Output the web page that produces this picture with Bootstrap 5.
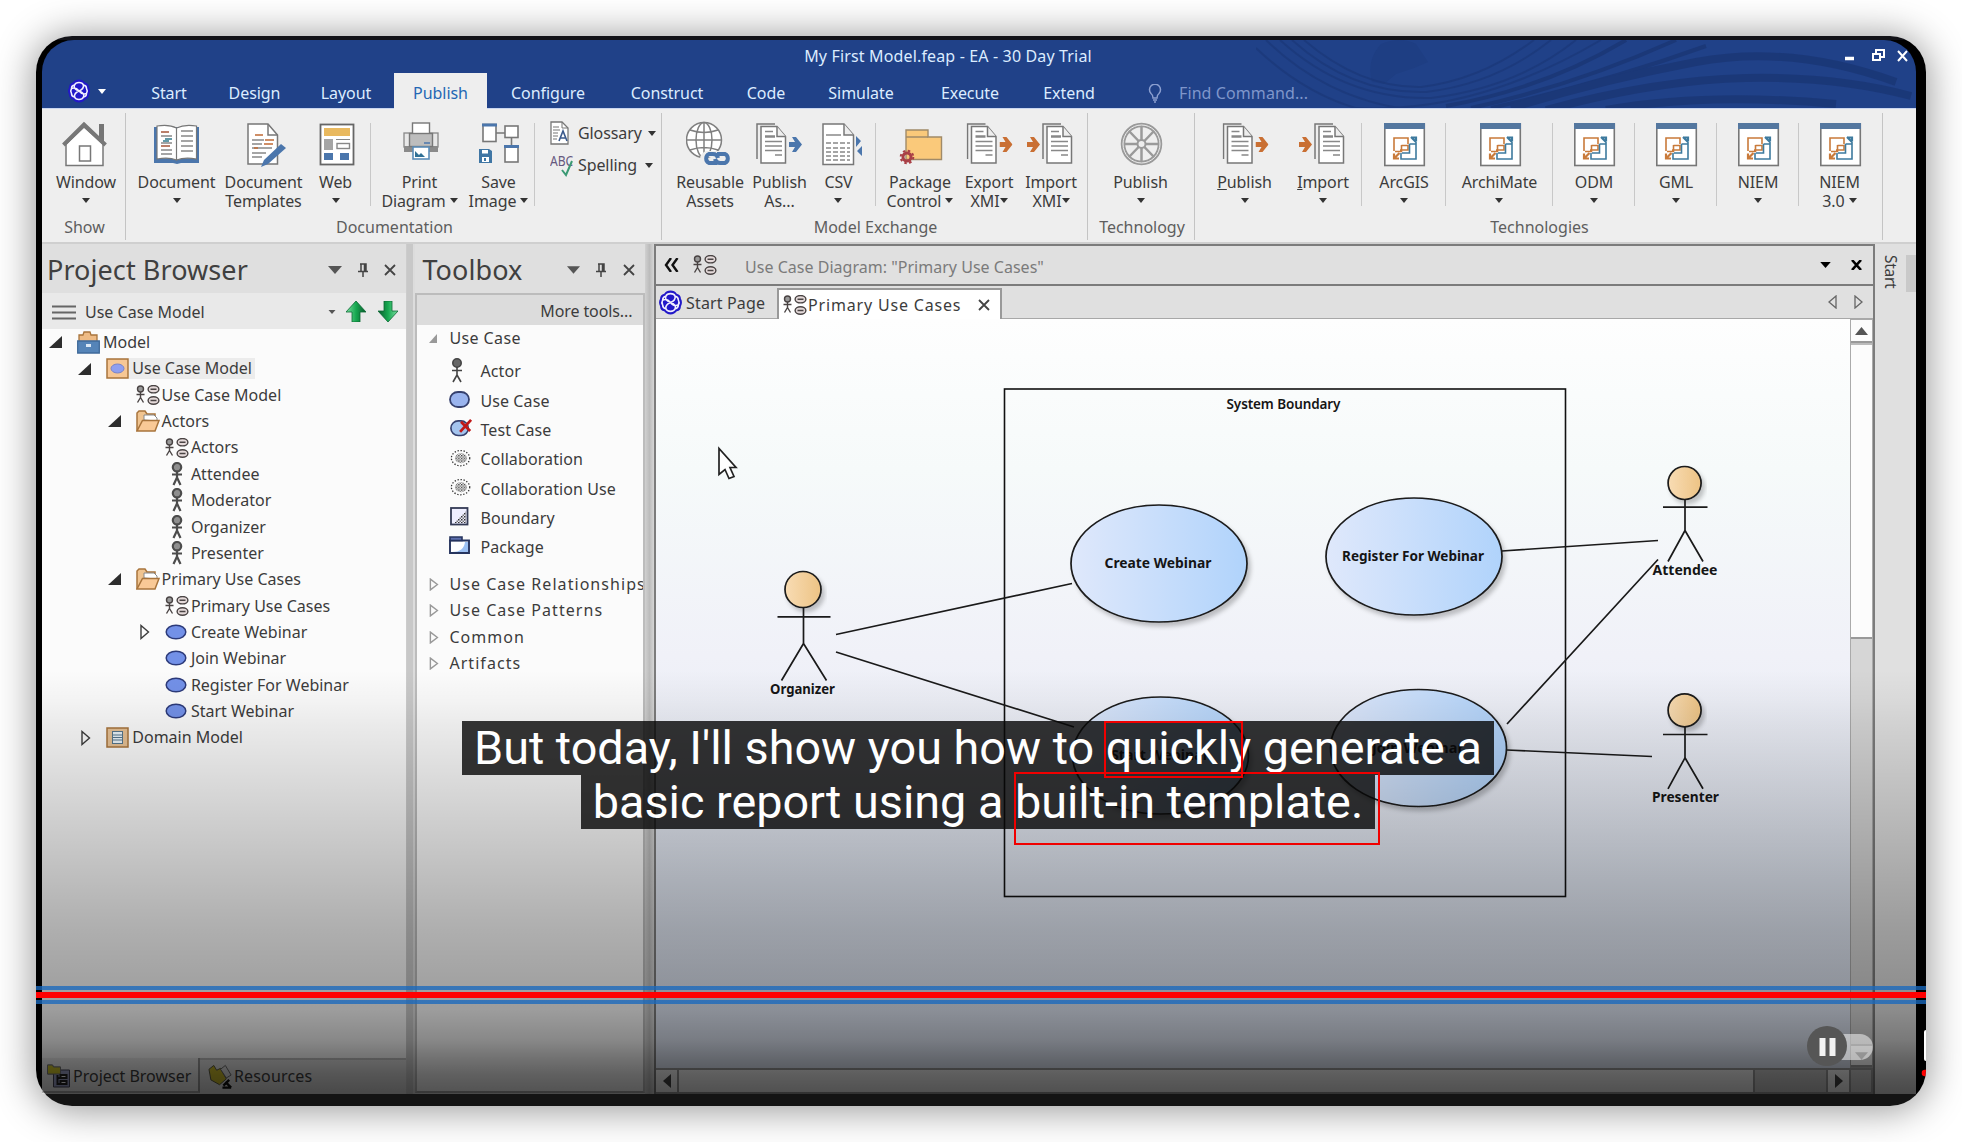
<!DOCTYPE html>
<html lang="en">
<head>
<meta charset="utf-8">
<title>My First Model.feap - EA - 30 Day Trial</title>
<meta name="viewport" content="width=device-width, initial-scale=1">
<link rel="stylesheet" href="https://cdn.jsdelivr.net/npm/bootstrap@5.3.0/dist/css/bootstrap.min.css">
<style>
body{background:#fff;font-family:"Noto Sans",sans-serif;font-size:16px;line-height:1.15;color:#3c3c3c;width:1962px;height:1142px;overflow:hidden;padding:36px}
.player{width:1890px;height:1070px;border-radius:36px;padding:4px 10px 12px 6px;background:linear-gradient(#131318 4px,#000 4px 1058px,#141414 1058px);box-shadow:0 2px 38px 2px rgba(0,0,0,.42);position:relative}
.clip{position:absolute;inset:0;border-radius:36px;overflow:hidden}
.stage{height:1054px;width:1874px;overflow:hidden;border-radius:32px 32px 22px 30px/32px 32px 0 0}
svg{display:block;flex:none}
/* title bar */
.titlebar{height:69px;background:#204188;color:#dcecff;position:relative;border-bottom:1px solid #c9d6f0}
.titlebar>.swirl{position:absolute;right:0;top:0}
.titlerow{height:33px;position:relative}
.titletext{padding-left:10px;font-size:16px;letter-spacing:.15px}
.winbtns{width:72px;height:33px}
.menu{height:35px;display:grid;grid-template-columns:85px 84px 87px 96px 93px 122px 116px 82px 108px 110px 88px 49px 140px;position:relative;letter-spacing:-.05px}
.menu>*{display:flex;align-items:center;justify-content:center;padding-top:4px;white-space:nowrap}
.menu>.current{background:#eee;color:#2467b4;height:36px}
.menu>.find{color:#7f96cb;justify-content:flex-start;padding-left:17px;letter-spacing:.1px}
.menu>.bulb{justify-content:flex-end}
/* ribbon */
.ribbon{height:135px;background:#eee;padding-top:4px;border-bottom:2px solid #cfcfcf;letter-spacing:-.1px}
.grp{height:127px;border-right:1px solid #c4c4c4;display:flex;flex-direction:column}
.grp>.items{height:102px;display:grid;white-space:nowrap}
.grp>.cap{text-align:center;color:#5e5e5e;height:25px;line-height:25px;letter-spacing:0;padding-left:2px}
.it{display:flex;flex-direction:column;align-items:center;padding-top:8px;line-height:18.5px;text-align:center}
.it>span{margin-top:6px;margin-left:-20px;margin-right:-20px}
.cut{background:linear-gradient(#c8c8c8,#c8c8c8) right 10px/1px 83px no-repeat}
.ar{display:inline-block;width:0;height:0;border:4px solid transparent;border-top:5px solid #333;border-bottom:0;vertical-align:4px}
.g1{width:84px}.g1 .items{grid-template-columns:88px}
.g2{width:536px}.g2 .items{grid-template-columns:101px 73px 71px 97px 61px 133px}
.g3{width:426px}.g3 .items{grid-template-columns:96px 43px 75px 88px 50px 74px}
.g4{width:107px}.g4 .items{grid-template-columns:105px}
.g5{width:688px}.g5 .items{grid-template-columns:10px 79px 78px 84px 107px 82px 82px 82px 81px}
.small-it{display:flex;align-items:center;height:32px}
.small-it>svg:first-child{width:28px}
/* panels */
.main{height:850px;background:#dadada}
.paneltitle{font-size:27px;height:49px;padding:2px 0 0 5px;background:#dfdfdf;color:#404040;white-space:nowrap;letter-spacing:.08px}
.browser{width:366px;background:#dfdfdf;border-right:1px solid #ccc}
.pathbar{height:36px;background:#e9e9e9;padding:2px 0 0 10px}
.tree{height:731px;background:#fbfbfb;margin:0;padding:0 0 0 7px;list-style:none;border-bottom:2px solid #c0c0c0}
.tree li{height:26.36px;display:flex;align-items:center;white-space:nowrap}
.tree .tw{width:28px}
.tree .ic{width:26px}
.d1{padding-left:29.3px}.d2{padding-left:58.6px}.d3{padding-left:87.9px}
.tree .picked{background:#ececec;padding:1px 3px 2px;margin:0 -3px}
.btabs{height:33px}
.btabs>div{display:flex;align-items:center;padding-left:4px;height:33px}
.btabs>.on{background:#ececec;width:158px;border-right:2px solid #999;border-bottom:2px solid #aaa;margin-top:-2px;height:35px;padding-top:3px}
.split1{width:8px;background:#c8c8c8;border-right:2px solid #dcdcdc}
.tools{width:230px;background:#dfdfdf;overflow:hidden}
.toolbody{height:800px;margin-top:0;border:2px solid #bcbcbc;border-bottom:2px solid #aaa;background:#fbfbfb;width:230px;overflow:hidden;letter-spacing:.1px}
.more{background:#dcdcdc;height:30px;text-align:right;padding:7px 11px 0 0;letter-spacing:-.1px}
.tgrp{display:flex;align-items:center;height:26.4px;white-space:nowrap;letter-spacing:1.05px;padding-left:11px}
.tgrp.top{height:27px;letter-spacing:.4px}
.tgrp>svg{width:21px}
.titem{display:flex;align-items:center;height:29.3px;white-space:nowrap;padding-left:32px}
.titem>svg{margin-right:7px}
.split2{width:9px;background:linear-gradient(90deg,#d0d0d0,#bcbcbc 50%,#d6d6d6)}
.work{width:1221px;border:2px solid #7c7c7c;border-bottom:0;background:#e0e0e0}
.crumb{height:40px;border-bottom:2px solid #7c7c7c;color:#7b7b7b;padding-left:8px}
.crumb span{padding-top:5px;letter-spacing:.02px}
.doctabs{height:33px;border-bottom:1px solid #a8a8a8;padding-left:2px}
.doctabs .open{background:#fff;border:1px solid #999;border-width:2px 2px 0;width:225px;height:31px;margin-top:2px;padding:1px 0 0 4px;letter-spacing:.82px}
.canvas{width:1194px;height:749px;background:linear-gradient(#fefefe,#f6fafa 20%,#f0f1f8 45%,#e2e8f3 75%,#dde4f2)}
.vscroll{width:23px;height:749px;background:#d6d6d6;border:1px solid #aaa}
.vscroll .bx{height:23px;background:#fcfcfc;border-bottom:2px solid #999}
.vscroll .th{height:296px;background:#fcfcfc;border-top:2px solid #bbb;border-bottom:2px solid #999}
.hscroll{height:26px;background:#c8c8c8;border:2px solid #999;border-left:0}
.hscroll .bx,.hscroll .th{background:#f4f4f4;border-right:2px solid #999}
.hscroll .bx{width:23px}.hscroll .th{width:1076px}
.dock{width:41px;background:#e0e0e0;padding:11px 0 0 8px}
.dock span{writing-mode:vertical-rl;line-height:16px;letter-spacing:-.3px;font-size:15.5px}
.dock i{width:10px;height:37px;background:#c9c9c9;margin-left:auto}
/* player overlays */
.scrim{position:absolute;left:6px;width:1874px;top:604px;height:454px;background:linear-gradient(rgba(0,0,0,0) 30px,rgba(0,0,0,.03) 60px,rgba(0,0,0,.065) 85px,rgba(0,0,0,.125) 135px,rgba(0,0,0,.19) 190px,rgba(0,0,0,.305) 290px,rgba(0,0,0,.355) 345px,rgba(0,0,0,.375) 370px,rgba(0,0,0,.46) 400px,rgba(0,0,0,.555) 420px,rgba(0,0,0,.62) 435px,rgba(0,0,0,.675) 454px)}
.subs{position:absolute;left:0;top:685px;width:1884px;font-family:Roboto,sans-serif;font-size:46.75px;line-height:55px;color:#fff;white-space:nowrap}
.subs div{background:rgba(8,8,8,.81);height:54px;text-align:center}
.s1{width:1032px;margin-left:426px}
.s2{width:794px;margin-left:545px}
.hl{position:absolute;border:2px solid #f00000}
.hl1{left:1068px;top:685px;width:139px;height:57px}
.hl2{left:978px;top:736px;width:366px;height:73px}
.bars{position:absolute;left:0;right:0;top:950px;height:18px;background:linear-gradient(rgba(25,105,190,.78) 0 4px,transparent 4px 6px,#f00 6px 12px,transparent 12px 14px,rgba(25,105,190,.78) 14px)}
.toggle{position:absolute;left:1770px;top:988px}
</style>
<script src="https://cdn.jsdelivr.net/npm/bootstrap@5.3.0/dist/js/bootstrap.bundle.min.js"></script>
</head>
<body>
<svg width="0" height="0" style="position:absolute">
<defs>
<linearGradient id="uc" x1="0" x2="1"><stop offset="0" stop-color="#dfe8fb"/><stop offset=".35" stop-color="#cfe1fb"/><stop offset="1" stop-color="#b0d3fb"/></linearGradient>
<linearGradient id="hd" x1="0" x2="1"><stop offset="0" stop-color="#f8dcb4"/><stop offset="1" stop-color="#edc384"/></linearGradient>
<linearGradient id="gr" x1="0" x2="1"><stop offset="0" stop-color="#7fe0a4"/><stop offset=".5" stop-color="#17a850"/><stop offset="1" stop-color="#0a5a2c"/></linearGradient>
<filter id="sh" x="-10%" y="-10%" width="125%" height="130%"><feDropShadow dx="3" dy="4" stdDeviation="2" flood-opacity=".22"/></filter>
<pattern id="dots" width="3" height="3" patternUnits="userSpaceOnUse"><rect width="1.5" height="1.5" fill="#333"/><rect x="1.5" y="1.5" width="1.5" height="1.5" fill="#777"/></pattern>
</defs>
<symbol id="house" viewBox="0 0 48 46"><path d="M37 3h5v20l-5-5z" fill="#757575"/><path d="M4 44.500V23L22 6l19 17v21.500z" fill="#fff" stroke="#777" stroke-width="1.500"/><path d="M1.500 24L22 3.500 43.500 24" fill="none" stroke="#777" stroke-width="4"/><rect x="17.500" y="25" width="11" height="15" fill="#fff" stroke="#777" stroke-width="1.500"/></symbol>
<symbol id="book" viewBox="0 0 48 46"><path d="M1 6h45v36H28l-4 1-4-1H1z" fill="#4b76ac"/><path d="M4 5q12-2 19.500 2v32Q16 36 4 38zM43.500 5q-12-2-20 2v32q8-3 20-1z" fill="#fff" stroke="#777" stroke-width="1.200"/><path d="M8 15h11M8 22h11M8 29h11M28 10h12M28 15h12M28 20h12M28 25h12M28 30h12M8 33h11" stroke="#888" stroke-width="1.300"/><path d="M8 11h8M8 25h9" stroke="#a4553a" stroke-width="1.500"/><path d="M12 18h7M10 20h6" stroke="#2f7a8c" stroke-width="1.500"/></symbol>
<symbol id="doctpl" viewBox="0 0 48 46"><path d="M8 3h20l9.500 11v29H8z" fill="#fff" stroke="#777" stroke-width="1.500"/><path d="M28 3v11h9.500" fill="none" stroke="#777" stroke-width="1.500"/><path d="M12 19h12M12 23h10M12 27h20M12 32h14M12 36h10" stroke="#888" stroke-width="1.400"/><path d="M15 14h8M25 19h9M24 23h9M14 27h4" stroke="#c06a35" stroke-width="1.600"/><path d="M41 23l5 4-18 16-7 3 3-7z" fill="#4b76ac"/></symbol>
<symbol id="web" viewBox="0 0 48 46"><rect x="8.500" y="3.500" width="33" height="40" fill="#fff" stroke="#666" stroke-width="1.800"/><path d="M12 7h26v8H12z" fill="#e9b95f"/><path d="M12 18h9v11h-9z" fill="#a5a5a5"/><path d="M24 18.500h14" stroke="#888"/><rect x="25" y="22.500" width="12.500" height="5" fill="none" stroke="#888" stroke-width="1.400"/><path d="M12 32h9v7h-9zM28 32h9v7h-9z" fill="#4b76ac"/></symbol>
<symbol id="print" viewBox="0 0 48 46"><rect x="8" y="12" width="34" height="14" fill="#e8e8e8" stroke="#888" stroke-width="1.300"/><path d="M8 25h34v6H8z" fill="#8a8a8a"/><rect x="16.500" y="2" width="17" height="11" fill="#fff" stroke="#777" stroke-width="1.400"/><rect x="13.500" y="12.500" width="23" height="13" fill="#bdbdbd" stroke="#777" stroke-width="1.400"/><path d="M28 22h6" stroke="#4b76ac" stroke-width="1.500"/><rect x="17" y="26" width="16" height="12" fill="#fff" stroke="#5b8db8" stroke-width="1.600"/><path d="M19 36v-6l4 4 2-2 4 4z" fill="#2f7096"/></symbol>
<symbol id="saveimg" viewBox="0 0 48 46"><path d="M21 12h9M36.500 16v9" stroke="#777" stroke-width="1.600"/><g fill="#fff" stroke="#777" stroke-width="1.600"><rect x="8" y="3.500" width="13" height="17"/><rect x="30" y="5" width="13" height="11.500"/><rect x="30" y="25" width="13" height="16"/></g><path d="M7 2.500h15v3H7zM29 24h15v3H29z" fill="#4b76ac"/><path d="M4 28h10l3 2v12H4z" fill="#3f76a4"/><path d="M7 29h6v3.500H7zM7 36h7v5H7z" fill="#fff"/><path d="M9 37h2v3H9z" fill="#3f76a4"/></symbol>
<symbol id="globe" viewBox="0 0 48 46"><g fill="none" stroke="#808080" stroke-width="1.500"><ellipse cx="18" cy="19" rx="17.500" ry="17.500" fill="#fff"/><ellipse cx="18" cy="19" rx="8" ry="17.500"/><path d="M18 1.500v35M.5 19h35M4 9q14 5 28 0M4 29q14-5 28 0"/></g><g fill="none" stroke="#eee" stroke-width="6"><rect x="17" y="33" width="27" height="10" rx="5"/></g><g fill="none" stroke="#4b76ac" stroke-width="4"><path d="M31 42h-8a5 5 0 0 1 0-9h4q4 0 5 4M29 38q1 4 5 4h5a5 5 0 0 0 0-9h-8"/></g></symbol>
<symbol id="pages" viewBox="0 0 32 46"><path d="M1 38V3h18" fill="none" stroke="#777" stroke-width="1.500"/><path d="M5 5.500h16l8.500 10V42H5z" fill="#fff" stroke="#777" stroke-width="1.500"/><path d="M21 5.500v10h8.500" fill="#eee" stroke="#777" stroke-width="1.500"/><path d="M9 10.500h8M9 20.500h17M9 25h17M9 29.500h17M19 34h7" stroke="#888" stroke-width="1.400"/><path d="M9 15.500h10" stroke="#888" stroke-width="2.400"/></symbol>
<symbol id="arr" viewBox="0 0 13 15"><path d="M0 5h6L3 0h4l6 7.500L7 15H3l3-5H0z" fill="currentColor"/></symbol>
<symbol id="pubas" viewBox="0 0 48 46"><use href="#pages" width="32" height="46"/><use href="#arr" x="33" y="16" width="13" height="15" color="#4b76ac"/></symbol>
<symbol id="export" viewBox="0 0 48 46"><use href="#pages" x="1.500" width="32" height="46"/><use href="#arr" x="34.500" y="16" width="13" height="15" color="#c96f33"/></symbol>
<symbol id="import" viewBox="0 0 48 46"><use href="#pages" x="15" width="32" height="46"/><use href="#arr" x="0" y="16" width="13" height="15" color="#c96f33"/></symbol>
<symbol id="csv" viewBox="0 0 48 46"><path d="M8 3h21l9.500 11v29.500H8z" fill="#fff" stroke="#777" stroke-width="1.500"/><path d="M29 3v11h9.500" fill="#eee" stroke="#777" stroke-width="1.500"/><path d="M11 14h15" stroke="#888" stroke-width="1.500"/><path d="M11 22h24M11 27h24M11 31h24M11 35h24M11 39h24" stroke="#888" stroke-width="1.500" stroke-dasharray="5 2"/><path d="M41 15l5 5-5 6zM47 25v10l-5-5z" fill="#4b76ac"/></symbol>
<symbol id="pkgctl" viewBox="0 0 48 46"><path d="M10 38.500V9h22v7h13.500v22.500z" fill="#fac97a" stroke="#a08a68" stroke-width="1.400"/><path d="M10 16h22" stroke="#a08a68" stroke-width="1.300"/><circle cx="11" cy="36" r="4" fill="none" stroke="#a93f46" stroke-width="3"/><circle cx="11" cy="36" r="6.300" fill="none" stroke="#a93f46" stroke-width="2" stroke-dasharray="2.500 2.450"/></symbol>
<symbol id="wheel" viewBox="0 0 48 46"><g fill="none" stroke="#9a9a9a"><ellipse cx="24.500" cy="23" rx="18.500" ry="19" stroke-width="4.500"/><ellipse cx="24.500" cy="23" rx="18.500" ry="19" stroke="#eee" stroke-width="1"/><path d="M24.500 5v36M7 23h35M12 10l25 26M37 10L12 36" stroke-width="2.500"/><circle cx="24.500" cy="23" r="4" fill="#eee" stroke-width="2"/></g></symbol>
<symbol id="techno" viewBox="0 0 48 46"><rect x="4.800" y="3" width="39.500" height="41.500" fill="#fff" stroke="#777" stroke-width="1.600"/><path d="M4 2h41v6H4z" fill="#54779f"/><g fill="none" stroke-width="1.600"><path d="M14 30V17h14v6M21.500 24v6.500H15M21.500 24.500h6.500v4.500h-8" stroke="#c97a3a"/><path d="M14 32.500v5h5M14.500 37l5-5" stroke="#c97a3a" stroke-width="2.200"/><path d="M36 21v17H21v-6M29.500 23H36M29.500 23v9H22" stroke="#3d7a9e"/><path d="M31 16.500h5v4M36 21l-5-5" stroke="#3d7a9e" stroke-width="2.200"/></g></symbol>
<symbol id="gloss" viewBox="0 0 19 24"><path d="M1 1h11l6 6v16H1z" fill="#fff" stroke="#777" stroke-width="1.300"/><path d="M12 1v6h6" fill="none" stroke="#777"/><path d="M3 6h6M3 9h7M3 12h5M3 15h5M3 18h4" stroke="#777" stroke-width="1.200"/><path d="M9 20l4-10 4 10M10.500 17h5" fill="none" stroke="#3b5a8c" stroke-width="1.600"/></symbol>
<symbol id="knot" viewBox="0 0 24 24"><path d="M12 .5q4 0 6 3 4 1 4 5 2 3.500 0 7 0 4-4 5-2 3-6 3t-6-3q-4-1-4-5-2-3.500 0-7 0-4 4-5 2-3 6-3z" fill="#2218c8"/><g fill="none" stroke="#f2f0ff" stroke-width="1.500"><path d="M12 3.500q3.500 0 4.500 2.500 3 .5 3 3.500 1.500 2.500 0 5 0 3-3 3.500-1 2.500-4.500 2.500T7.500 18q-3-.5-3-3.500-1.500-2.500 0-5 0-3 3-3.500 1-2.500 4.500-2.500z"/><path d="M16.500 6q.5 4-4.500 6-5 2-4.500 6M7.500 6Q6 10 12 12q6 2 4.500 6M4.500 9.500Q9 8 12 12q3 4 7.500 2.500"/></g></symbol>
<symbol id="opened" viewBox="0 0 13 12"><path d="M13 0v12H0z" fill="#2d2d2d"/></symbol>
<symbol id="shut" viewBox="0 0 10 16"><path d="M1 1.500v13L8.500 8z" fill="none" stroke="currentColor" stroke-width="1.400"/></symbol>
<symbol id="cabinet" viewBox="0 0 23 23"><path d="M2 11V4h4l1-3h6l1 3h6v7z" fill="#eebb85" stroke="#a8743c" stroke-width="1.300"/><path d="M.7 10h21.600v12H.7z" fill="#5584b8" stroke="#3f6a9a" stroke-width="1.300"/><path d="M9 13h5v3H9z" fill="#dbe8f6"/></symbol>
<symbol id="ucpkg" viewBox="0 0 23 21"><rect x="1" y="1" width="21" height="19" fill="#f6c795" stroke="#a8743c" stroke-width="1.500"/><ellipse cx="11.500" cy="10.500" rx="6.500" ry="4.500" fill="#8f9ff0" stroke="#7a84c8"/></symbol>
<symbol id="dompkg" viewBox="0 0 23 21"><rect x="1" y="1" width="21" height="19" fill="#e6c195" stroke="#a8743c" stroke-width="1.500"/><rect x="6.500" y="4.500" width="10" height="12" fill="#e8f2f8" stroke="#56768c"/><path d="M7 8h9M7 10.500h9M7 13h9" stroke="#56768c"/></symbol>
<symbol id="ucd" viewBox="0 0 24 20"><g fill="none" stroke="#4a4444" stroke-width="1.400"><circle cx="4.500" cy="4" r="3" fill="#999"/><path d="M4.500 7v6M.5 9.500h8M4.500 12.500L1.500 17.500M4.500 12.500l3 5"/><g fill="#e5dada"><ellipse cx="17.500" cy="4.200" rx="5.400" ry="3.700"/><ellipse cx="17.500" cy="15.500" rx="5.400" ry="3.700"/></g><path d="M14.500 4.200h6M14.500 15.500h6"/></g></symbol>
<symbol id="fold" viewBox="0 0 24 22"><path d="M1 21V3l2-2h6l2 3h8v6" fill="#f0c490" stroke="#a8743c" stroke-width="1.500"/><path d="M8 10V5h10l3 3v3z" fill="#fff" stroke="#888"/><path d="M1 21L6.500 10.500H23L19 21z" fill="#f9c996" stroke="#a8743c" stroke-width="1.500"/></symbol>
<symbol id="man" viewBox="0 0 12 24"><g stroke="#4c4c4c" stroke-width="2.200" fill="none"><circle cx="6" cy="5.200" r="4.200" fill="#8f8f8f"/><path d="M6 9v7M1 12.500h10M6 15.500L2.500 23M6 15.500L9.500 23"/></g></symbol>
<symbol id="oval" viewBox="0 0 22 16"><ellipse cx="11" cy="8" rx="9.800" ry="6.800" fill="#7391e8" stroke="#2c3a7a" stroke-width="1.500"/></symbol>
<symbol id="coll" viewBox="0 0 23 19"><ellipse cx="11.500" cy="9.500" rx="10" ry="8.300" fill="none" stroke="#333" stroke-width="1.400" stroke-dasharray="1.500 1.800"/><ellipse cx="12" cy="9.500" rx="6.500" ry="5.500" fill="url(#dots)"/></symbol>
<symbol id="pin" viewBox="0 0 10 14"><path d="M2 1h6v7M3 1v7M0 8.500h10M5 8.500V14M6.500 1v7" fill="none" stroke="#444" stroke-width="1.500"/></symbol>
<symbol id="cross" viewBox="0 0 12 12"><path d="M1 1l10 10M11 1L1 11" stroke="currentColor" stroke-width="1.800"/></symbol>
<symbol id="dn" viewBox="0 0 14 8"><path d="M0 0h14L7 8z" fill="currentColor"/></symbol>
<symbol id="garrow" viewBox="0 0 20 21"><path d="M10 0l10 11h-6v10H6V11H0z" fill="url(#gr)" stroke="#0a6a34" stroke-width=".8"/></symbol>
</svg>

<div class="player">
<div class="stage">
  <header class="titlebar">
    <svg class="swirl" width="660" height="68" viewBox="0 0 660 68" fill="none" stroke="#1a3675" opacity=".8">
      <g stroke-width="2" opacity=".7"><path d="M0 8Q70 75 160 78"/><path d="M10 0Q80 68 180 72"/><path d="M24 0Q90 60 175 58 260 48 320 0"/><path d="M36 0Q96 54 170 52 240 44 295 0"/><path d="M48 0Q104 48 165 47 225 40 278 0"/><path d="M100 68Q220 74 345 0"/></g>
      <g stroke-width="4"><path d="M190 66Q290 48 370 0"/><path d="M215 68Q320 45 420 0"/><path d="M235 68Q350 42 450 6"/></g>
      <g stroke-width="8"><path d="M255 68Q345 40 440 22T640 42"/><path d="M290 70Q400 40 490 38T655 56"/><path d="M350 70Q450 52 580 64"/></g>
      <path d="M125 4q20-8 35 0l12 18-14 6-18 6-12 10-12-2q-6-22 9-38z" fill="#1a3675" stroke="none" opacity=".35"/>
    </svg>
    <div class="titlerow d-flex align-items-center">
      <div class="titletext flex-grow-1 text-center">My First Model.feap - EA - 30 Day Trial</div>
      <svg class="winbtns" viewBox="0 0 72 33" fill="none" stroke="#fff"><path d="M1 18.500h9" stroke-width="3.500"/><path d="M32 13v-3h8v7h-3" stroke-width="2"/><rect x="29" y="14" width="7" height="6" stroke-width="2"/><path d="M54 11l9 10M63 11l-9 10" stroke-width="2"/></svg>
    </div>
    <nav class="menu">
      <span class="pt-0"><svg width="24" height="24" style="margin:0 7px 0 3px"><use href="#knot"/></svg><i class="ar" style="border-top-color:#fff"></i></span>
      <span>Start</span><span>Design</span><span>Layout</span><span class="current">Publish</span><span>Configure</span><span>Construct</span><span>Code</span><span>Simulate</span><span>Execute</span><span>Extend</span>
      <span class="bulb"><svg width="14" height="19" viewBox="0 0 14 19" fill="none" stroke="#8b9fd0" stroke-width="1.500"><path d="M5 14q0-3-2-4.500a5.500 5.500 0 1 1 8 0Q9 11 9 14zM5 16h4M6 18h2"/></svg></span>
      <span class="find">Find Command...</span>
    </nav>
  </header>

  <section class="ribbon d-flex">
    <div class="grp g1"><div class="items">
      <div class="it"><svg width="48" height="46"><use href="#house"/></svg><span>Window<br><i class="ar"></i></span></div></div><div class="cap">Show</div></div>
    <div class="grp g2"><div class="items">
      <div class="it"><svg width="48" height="46"><use href="#book"/></svg><span>Document<br><i class="ar"></i></span></div>
      <div class="it"><svg width="48" height="46"><use href="#doctpl"/></svg><span>Document<br>Templates</span></div>
      <div class="it cut"><svg width="48" height="46"><use href="#web"/></svg><span>Web<br><i class="ar"></i></span></div>
      <div class="it"><svg width="48" height="46"><use href="#print"/></svg><span>Print<br>Diagram <i class="ar ms-n1"></i></span></div>
      <div class="it"><svg width="48" height="46"><use href="#saveimg"/></svg><span>Save<br>Image <i class="ar"></i></span></div>
      <div class="d-flex pt-1"><div class="me-3" style="width:1px;height:83px;margin:6px 0 0 5px;background:#c8c8c8"></div><div style="margin-left:-1px">
        <div class="small-it"><svg width="19" height="24" viewBox="0 0 28 24"><use href="#gloss" width="19" height="24"/></svg><span>Glossary</span><i class="ar" style="margin-left:6px"></i></div>
        <div class="small-it"><svg width="28" height="24" viewBox="0 0 28 24"><text x="0" y="13" font-size="14" textLength="23" lengthAdjust="spacingAndGlyphs" fill="#65587e">ABC</text><path d="M12 17l4 5 6-14" fill="none" stroke="#3b9a74" stroke-width="2"/></svg><span>Spelling</span><i class="ar ms-2"></i></div>
      </div></div></div><div class="cap">Documentation</div></div>
    <div class="grp g3"><div class="items">
      <div class="it"><svg width="48" height="46"><use href="#globe"/></svg><span>Reusable<br>Assets</span></div>
      <div class="it"><svg width="48" height="46"><use href="#pubas"/></svg><span>Publish<br>As...</span></div>
      <div class="it cut"><svg width="48" height="46"><use href="#csv"/></svg><span>CSV<br><i class="ar"></i></span></div>
      <div class="it"><svg width="48" height="46"><use href="#pkgctl"/></svg><span>Package<br>Control <i class="ar"></i></span></div>
      <div class="it"><svg width="48" height="46"><use href="#export"/></svg><span>Export<br>XMI<i class="ar"></i></span></div>
      <div class="it"><svg width="48" height="46"><use href="#import"/></svg><span>Import<br>XMI<i class="ar"></i></span></div></div><div class="cap">Model Exchange</div></div>
    <div class="grp g4"><div class="items">
      <div class="it"><svg width="48" height="46"><use href="#wheel"/></svg><span>Publish<br><i class="ar"></i></span></div></div><div class="cap">Technology</div></div>
    <div class="grp g5"><div class="items"><div></div>
      <div class="it"><svg width="48" height="46"><use href="#export"/></svg><span><u>P</u>ublish<br><i class="ar"></i></span></div>
      <div class="it cut"><svg width="48" height="46"><use href="#import"/></svg><span><u>I</u>mport<br><i class="ar"></i></span></div>
      <div class="it cut"><svg width="48" height="46"><use href="#techno"/></svg><span>ArcGIS<br><i class="ar"></i></span></div>
      <div class="it cut"><svg width="48" height="46"><use href="#techno"/></svg><span>ArchiMate<br><i class="ar"></i></span></div>
      <div class="it cut"><svg width="48" height="46"><use href="#techno"/></svg><span>ODM<br><i class="ar"></i></span></div>
      <div class="it cut"><svg width="48" height="46"><use href="#techno"/></svg><span>GML<br><i class="ar"></i></span></div>
      <div class="it cut"><svg width="48" height="46"><use href="#techno"/></svg><span>NIEM<br><i class="ar"></i></span></div>
      <div class="it"><svg width="48" height="46"><use href="#techno"/></svg><span>NIEM<br>3.0 <i class="ar"></i></span></div></div><div class="cap">Technologies</div></div>
  </section>

  <main class="main d-flex">
    <aside class="browser">
      <div class="paneltitle d-flex align-items-center"><span class="flex-grow-1">Project Browser</span><svg width="14" height="8" color="#555"><use href="#dn"/></svg><svg width="10" height="14" class="ms-3 me-3"><use href="#pin"/></svg><svg width="12" height="12" color="#444" style="margin-right:10px"><use href="#cross"/></svg></div>
      <div class="pathbar d-flex align-items-center"><svg width="24" height="15" viewBox="0 0 24 15"><path d="M0 1.500h24M0 7.500h24M0 13.500h24" stroke="#666" stroke-width="2"/></svg><span class="flex-grow-1" style="margin-left:9px">Use Case Model</span><svg width="8" height="4" color="#555"><use href="#dn"/></svg><svg width="20" height="21" style="margin:-2px 12px 0 10px"><use href="#garrow"/></svg><svg width="20" height="21" style="margin:-2px 8px 0 0" viewBox="0 0 20 21"><g transform="rotate(180 10 10.500)"><use href="#garrow" width="20" height="21"/></g></svg></div>
      <ul class="tree">
        <li><span class="tw"><svg width="13" height="12"><use href="#opened"/></svg></span><span class="ic"><svg width="23" height="23"><use href="#cabinet"/></svg></span>Model</li>
        <li class="d1"><span class="tw"><svg width="13" height="12"><use href="#opened"/></svg></span><span class="ic"><svg width="23" height="21"><use href="#ucpkg"/></svg></span><span class="picked">Use Case Model</span></li>
        <li class="d2"><span class="tw"></span><span class="ic"><svg width="24" height="20"><use href="#ucd"/></svg></span>Use Case Model</li>
        <li class="d2"><span class="tw"><svg width="13" height="12"><use href="#opened"/></svg></span><span class="ic"><svg width="24" height="22"><use href="#fold"/></svg></span>Actors</li>
        <li class="d3"><span class="tw"></span><span class="ic"><svg width="24" height="20"><use href="#ucd"/></svg></span>Actors</li>
        <li class="d3"><span class="tw"></span><span class="ic"><svg width="24" height="24"><use href="#man"/></svg></span>Attendee</li>
        <li class="d3"><span class="tw"></span><span class="ic"><svg width="24" height="24"><use href="#man"/></svg></span>Moderator</li>
        <li class="d3"><span class="tw"></span><span class="ic"><svg width="24" height="24"><use href="#man"/></svg></span>Organizer</li>
        <li class="d3"><span class="tw"></span><span class="ic"><svg width="24" height="24"><use href="#man"/></svg></span>Presenter</li>
        <li class="d2"><span class="tw"><svg width="13" height="12"><use href="#opened"/></svg></span><span class="ic"><svg width="24" height="22"><use href="#fold"/></svg></span>Primary Use Cases</li>
        <li class="d3"><span class="tw"></span><span class="ic"><svg width="24" height="20"><use href="#ucd"/></svg></span>Primary Use Cases</li>
        <li class="d3"><span class="tw"><svg width="10" height="16" style="margin-left:3px"><use href="#shut"/></svg></span><span class="ic"><svg width="22" height="16"><use href="#oval"/></svg></span>Create Webinar</li>
        <li class="d3"><span class="tw"></span><span class="ic"><svg width="22" height="16"><use href="#oval"/></svg></span>Join Webinar</li>
        <li class="d3"><span class="tw"></span><span class="ic"><svg width="22" height="16"><use href="#oval"/></svg></span>Register For Webinar</li>
        <li class="d3"><span class="tw"></span><span class="ic"><svg width="22" height="16"><use href="#oval"/></svg></span>Start Webinar</li>
        <li class="d1"><span class="tw"><svg width="10" height="16" style="margin-left:3px"><use href="#shut"/></svg></span><span class="ic"><svg width="23" height="21"><use href="#dompkg"/></svg></span>Domain Model</li>
      </ul>
      <div class="btabs d-flex">
        <div class="on"><svg width="27" height="24" viewBox="0 0 26 24"><path d="M1 10V1h5l1 2h7v7z" fill="#cfc52a" stroke="#777"/><path d="M7 6h16v17H7z" fill="#9aa0c8" stroke="#445"/><path d="M1 10V1h5l1 2h7v7z" fill="#cfc52a" stroke="#777"/><path d="M11 11v9h4M11 14h4" fill="none" stroke="#222" stroke-width="2"/><path d="M14 11h6v3h-6zM14 17h6v3h-6z" fill="#fff" stroke="#222" stroke-width="2"/></svg><span>Project Browser</span></div>
        <div class="ps-2"><svg width="26" height="26" viewBox="0 0 27 26"><path d="M1 5l5-4 3 5 4-2 6 11-7 6L3 16z" fill="#c9b92a" stroke="#554"/><path d="M13 5l5-4 6 10-5 3z" fill="#ddd" stroke="#666"/><path d="M16 22l6-6M15 24h9M18 18l6 6" stroke="#111" stroke-width="2.500"/></svg><span style="letter-spacing:.15px">Resources</span></div>
      </div>
    </aside>
    <div class="split1"></div>
    <aside class="tools">
      <div class="paneltitle d-flex align-items-center" style="padding-left:7px"><span class="flex-grow-1">Toolbox</span><svg width="13" height="8" color="#555"><use href="#dn"/></svg><svg width="10" height="14" style="margin:0 17px 0 16px"><use href="#pin"/></svg><svg width="12" height="12" color="#444" style="margin-right:10px"><use href="#cross"/></svg></div>
      <div class="toolbody">
        <div class="more">More tools...</div>
        <div class="tgrp top"><svg width="9" height="9" viewBox="0 0 21 9"><path d="M9 0v9H1z" fill="#999"/></svg>Use Case</div>
        <div class="titem" style="margin-top:5px"><svg width="24" height="27" viewBox="-1 0 24 27"><g stroke="#444" stroke-width="1.600" fill="none"><circle cx="7" cy="5" r="4.200" fill="#666"/><path d="M7 9v9M2 12.500h10M7 17l-4 7M7 17l4 7"/></g></svg>Actor</div>
        <div class="titem"><svg width="24" height="20" viewBox="0 0 24 20"><rect x="1" y="1" width="19" height="15" rx="8" fill="#9ab4ee" stroke="#35406e" stroke-width="1.800"/></svg>Use Case</div>
        <div class="titem"><svg width="24" height="22" viewBox="0 0 24 24"><rect x="1" y="2" width="19" height="16" rx="8" fill="#a4c4ee" stroke="#35406e" stroke-width="1.800"/><path d="M12 3l10 10M23 1L11 14" stroke="#c01818" stroke-width="3"/></svg>Test Case</div>
        <div class="titem"><svg width="24" height="22" viewBox="0 0 24 24"><use href="#coll" width="23" height="20"/></svg>Collaboration</div>
        <div class="titem"><svg width="24" height="22" viewBox="0 0 24 24"><use href="#coll" width="23" height="20"/></svg>Collaboration Use</div>
        <div class="titem"><svg width="24" height="22" viewBox="0 0 24 22"><rect x="2" y="1" width="16.500" height="16.500" fill="#eef" stroke="#333a55" stroke-width="1.800"/><path d="M5 16L17 4v12z" fill="url(#dots)"/></svg>Boundary</div>
        <div class="titem"><svg width="24" height="22" viewBox="0 0 24 22"><path d="M1 17V4.500h19V17z" fill="#fff" stroke="#26345e" stroke-width="1.900"/><path d="M3 16q12 0 13-10h3v10z" fill="#9cc0f2"/><path d="M1 4.500V1h12v3.500z" fill="#5d6fae" stroke="#26345e" stroke-width="1.600"/></svg>Package</div>
        <div class="tgrp" style="margin-top:9px"><svg width="8" height="13" viewBox="0 0 18 12"><path d="M1.500 1v10L8 6z" fill="none" stroke="#999" stroke-width="1.300"/></svg>Use Case Relationships</div>
        <div class="tgrp"><svg width="8" height="13" viewBox="0 0 18 12"><path d="M1.500 1v10L8 6z" fill="none" stroke="#999" stroke-width="1.300"/></svg>Use Case Patterns</div>
        <div class="tgrp"><svg width="8" height="13" viewBox="0 0 18 12"><path d="M1.500 1v10L8 6z" fill="none" stroke="#999" stroke-width="1.300"/></svg>Common</div>
        <div class="tgrp"><svg width="8" height="13" viewBox="0 0 18 12"><path d="M1.500 1v10L8 6z" fill="none" stroke="#999" stroke-width="1.300"/></svg>Artifacts</div>
      </div>
    </aside>
    <div class="split2"></div>
    <section class="work">
      <div class="crumb d-flex align-items-center"><svg width="15" height="14" viewBox="0 0 15 14" fill="none" stroke="#111" stroke-width="2.400"><path d="M7 0L2 7l5 7M13.500 0l-5 7 5 7"/></svg><svg width="24" height="20" style="margin:0 28px 0 14px"><use href="#ucd"/></svg><span class="flex-grow-1">Use Case Diagram: "Primary Use Cases"</span><svg width="11" height="6" color="#000"><use href="#dn"/></svg><svg width="11" height="10" viewBox="0 0 11 10" style="margin:0 11px 0 20px"><path d="M1 0l9 10M10 0L1 10" stroke="#000" stroke-width="2.600"/></svg></div>
      <div class="doctabs d-flex">
        <div class="d-flex align-items-center" style="width:119px"><svg width="25" height="25" style="margin-right:3px"><use href="#knot"/></svg><span style="letter-spacing:.15px;padding-top:2px">Start Page</span></div>
        <div class="open d-flex align-items-center"><svg width="24" height="20" style="margin-right:1px"><use href="#ucd"/></svg><span>Primary Use Cases</span><svg width="12" height="12" style="margin-left:17px" color="#444"><use href="#cross"/></svg></div>
        <div class="ms-auto d-flex align-items-center"><svg width="9" height="14" viewBox="0 0 9 14"><path d="M8 1v12L1 7z" fill="none" stroke="#666" stroke-width="1.300"/></svg><svg width="9" height="14" viewBox="0 0 9 14" style="margin:0 10px 0 17px"><path d="M1 1v12l7-6z" fill="none" stroke="#666" stroke-width="1.300"/></svg></div>
      </div>
      <div class="d-flex">
        <div class="canvas">
          <svg width="1194" height="749" viewBox="656 319.500 1194 749" font-size="14.500" font-weight="700" text-anchor="middle" fill="#151515" stroke="none">
            <rect x="1004.500" y="389.500" width="561" height="507.500" fill="none" stroke="#111" stroke-width="1.600"/>
            <text x="1283.500" y="409" font-size="13.500" font-weight="600" textLength="114">System Boundary</text>
            <g fill="url(#uc)" stroke="#1a1a1a" stroke-width="1.700" filter="url(#sh)">
              <ellipse cx="1159" cy="564" rx="88" ry="58.500"/><ellipse cx="1414" cy="557" rx="88" ry="58.500"/><ellipse cx="1160.500" cy="756" rx="88" ry="58.500"/><ellipse cx="1418.500" cy="748.500" rx="88" ry="58.500"/></g>
            <text x="1158" y="568" textLength="107" lengthAdjust="spacingAndGlyphs">Create Webinar</text>
            <text x="1413" y="561" textLength="142" lengthAdjust="spacingAndGlyphs">Register For Webinar</text>
            <text x="1160" y="760" textLength="98" lengthAdjust="spacingAndGlyphs">Start Webinar</text>
            <text x="1418" y="753" textLength="92" lengthAdjust="spacingAndGlyphs">Join Webinar</text>
            <g stroke="#1a1a1a" stroke-width="1.700" fill="none">
              <path d="M836 635L1072 584M836 652.500L1074 727.500M1502 551.500L1658 541M1658 560L1507 724.500M1507 750.500L1652 757"/>
              <g id="fig"><ellipse cx="1684.600" cy="483.500" rx="16.500" ry="16.500" fill="url(#hd)" filter="url(#sh)"/><path d="M1685 500v31M1663 507.700h44.500M1685 531l-17 31M1685 531l18 31"/></g>
              <use href="#fig" y="227.300"/>
              <circle cx="803" cy="590" r="18" fill="url(#hd)" filter="url(#sh)"/><path d="M803.500 608v36M777.500 617.300h53M803.500 644l-22 37M803.500 644l23 37"/>
            </g>
            <text x="1685" y="575" textLength="65" lengthAdjust="spacingAndGlyphs">Attendee</text>
            <text x="1685.500" y="802" textLength="67" lengthAdjust="spacingAndGlyphs">Presenter</text>
            <text x="802.500" y="694" textLength="65" lengthAdjust="spacingAndGlyphs">Organizer</text>
            <path d="M719 449v26l6-5 4 9 5-2-4-9h6z" fill="#fff" stroke="#222" stroke-width="1.700"/>
          </svg>
        </div>
        <div class="vscroll d-flex flex-column"><div class="bx d-flex align-items-center justify-content-center"><svg width="13" height="8" viewBox="0 0 13 8"><path d="M0 8h13L6.500 0z" fill="#555"/></svg></div><div class="th"></div><div class="mt-auto bx d-flex align-items-center justify-content-center" style="border-top:2px solid #999"><svg width="13" height="8" color="#555"><use href="#dn"/></svg></div></div>
      </div>
      <div class="hscroll d-flex"><div class="bx d-flex align-items-center justify-content-center"><svg width="8" height="14" viewBox="0 0 8 14"><path d="M8 0v14L0 7z" fill="#444"/></svg></div><div class="th"></div><div class="bx d-flex align-items-center justify-content-center" style="margin-left:71px;border-left:2px solid #999;width:25px"><svg width="8" height="14" viewBox="0 0 8 14"><path d="M0 0v14l8-7z" fill="#444"/></svg></div></div>
    </section>
    <aside class="dock d-flex align-items-start"><span>Start</span><i></i></aside>
  </main>
</div>
<div class="clip">
  <div class="scrim"></div>
  <div class="subs"><div class="s1">But today, I'll show you how to quickly generate a</div><div class="s2">basic report using a built-in template.</div></div>
  <div class="hl hl1"></div><div class="hl hl2"></div>
  <div class="bars"></div>
  <svg class="toggle" width="120" height="60" viewBox="0 0 120 60"><rect x="14" y="10" width="53" height="26" rx="13" fill="#fff" fill-opacity=".5"/><circle cx="21" cy="22" r="20" fill="#565656"/><path d="M13.500 14h6v18h-6zM23.500 14h6v18h-6z" fill="#f2f2f2"/><rect x="118" y="6" width="8" height="31" rx="2" fill="#fff"/><circle cx="119" cy="49" r="3.300" fill="#f00"/></svg>
</div>
</div>
</body>
</html>
